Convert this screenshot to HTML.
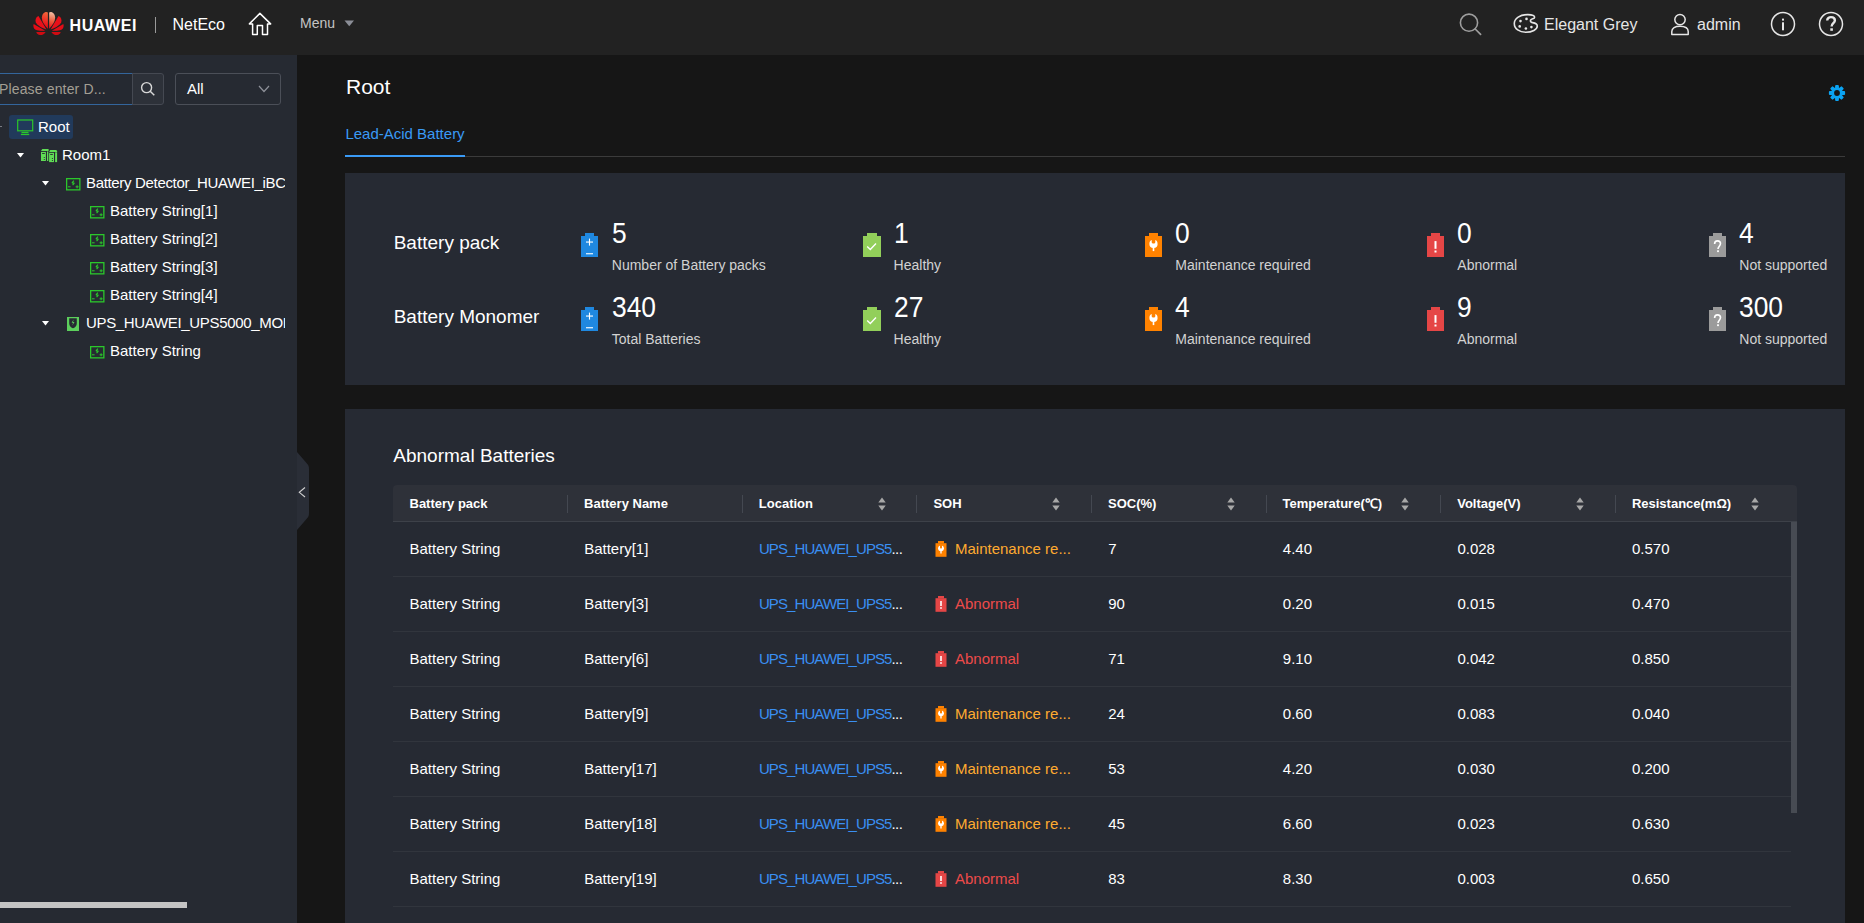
<!DOCTYPE html>
<html><head><meta charset="utf-8">
<style>
*{margin:0;padding:0;box-sizing:border-box}
html,body{width:1864px;height:923px;overflow:hidden;background:#161616;font-family:"Liberation Sans",sans-serif;color:#fff}
.a{position:absolute}
.t{position:absolute;white-space:nowrap;line-height:1}
svg{position:absolute;overflow:visible}
</style></head><body>

<div class="a" style="left:0;top:55px;width:297px;height:868px;background:#262a32"></div>
<div class="a" style="left:-20px;top:73px;width:153px;height:32px;border:1px solid #33659c;border-right:none;border-radius:2px 0 0 2px;background:#252931"></div>
<div class="a" style="left:132px;top:73px;width:32px;height:32px;border:1px solid #454952;border-radius:0 3px 3px 0;background:#2d3139"></div>
<svg style="left:140px;top:81px" width="16" height="16" viewBox="0 0 16 16"><circle cx="6.6" cy="6.6" r="5" fill="none" stroke="#d8d8d8" stroke-width="1.4"/><line x1="10.2" y1="10.2" x2="14.3" y2="14.3" stroke="#d8d8d8" stroke-width="1.5"/></svg>
<div class="t" style="left:-1.0px;top:82.1px;font-size:14px;color:#a39f94;font-weight:400;letter-spacing:0.15px">Please enter D...</div>
<div class="a" style="left:175px;top:73px;width:106px;height:32px;border:1px solid #4b4f58;border-radius:3px;background:#262a32"></div>
<div class="t" style="left:187.0px;top:81.3px;font-size:15px;color:#fff;font-weight:400;">All</div>
<svg style="left:258px;top:85px" width="12" height="8" viewBox="0 0 12 8"><polyline points="1,1 6,6.5 11,1" fill="none" stroke="#8e9199" stroke-width="1.2"/></svg>
<div class="a" style="left:0;top:126px;width:2px;height:1px;background:#7a7d84"></div>
<div class="a" style="left:9px;top:115px;width:64px;height:24px;background:#213a5b;border-radius:3px"></div>
<svg style="left:17px;top:119px" width="17" height="17" viewBox="0 0 17 17"><rect x="0.7" y="1.0" width="15" height="10.8" fill="none" stroke="#2bc72b" stroke-width="1.2"/><rect x="4.5" y="12.8" width="7" height="1.3" fill="#2bc72b"/><rect x="3.9" y="14.8" width="8.3" height="1.3" fill="#2bc72b"/></svg>
<div class="t" style="left:38.0px;top:119.3px;font-size:15px;color:#fff;font-weight:400;">Root</div>
<svg style="left:17.3px;top:152.6px" width="8" height="5" viewBox="0 0 8 5"><polygon points="0,0 7,0 3.5,4.5" fill="#fff"/></svg>
<svg style="left:38px;top:145px" width="22" height="20" viewBox="0 0 22 20">
<path d="M4.3 3.9 L10.2 3.9 L10.6 4.6 L10.6 5.9 L3 5.9 Z" fill="#5fdc55"/>
<rect x="3" y="6.9" width="4.9" height="9.1" fill="#5fdc55"/><rect x="9" y="6.4" width="1.3" height="9.6" fill="#5fdc55"/>
<rect x="4.1" y="8.1" width="2.7" height="0.9" fill="#262a32"/><circle cx="6.3" cy="12.5" r="0.6" fill="#262a32"/><circle cx="6.3" cy="14.5" r="0.6" fill="#262a32"/>
<path d="M12.2 5 L18.2 5 L19.1 5.9 L19.1 6.9 L11.1 6.9 Z" fill="#5fdc55"/>
<rect x="11.1" y="7.8" width="4.9" height="9.3" fill="#5fdc55"/><rect x="17.1" y="7.3" width="2" height="9.8" fill="#5fdc55"/>
<rect x="12.2" y="9.0" width="2.6" height="0.9" fill="#262a32"/><circle cx="14.4" cy="13.5" r="0.6" fill="#262a32"/><circle cx="14.4" cy="15.5" r="0.6" fill="#262a32"/>
</svg>
<div class="t" style="left:62.0px;top:147.3px;font-size:15px;color:#fff;font-weight:400;">Room1</div>
<svg style="left:41.5px;top:180.6px" width="8" height="5" viewBox="0 0 8 5"><polygon points="0,0 7,0 3.5,4.5" fill="#fff"/></svg>
<svg style="left:65.5px;top:177.5px" width="15" height="13" viewBox="0 0 15 13">
<rect x="0.65" y="0.65" width="13.2" height="11.2" fill="none" stroke="#2bc72b" stroke-width="1.3"/>
<path d="M7.9 2.6 L6.0 4.9 L8.3 5.1 L6.6 7.2" fill="none" stroke="#2bc72b" stroke-width="1.1" stroke-linejoin="bevel"/>
<rect x="2.0" y="8.3" width="2.6" height="1.0" fill="#2bc72b"/>
<rect x="9.6" y="8.3" width="3.0" height="1.0" fill="#2bc72b"/><rect x="10.6" y="7.3" width="1.0" height="3.0" fill="#2bc72b"/>
</svg>
<div class="a" style="left:86px;top:165px;width:199px;height:28px;overflow:hidden">
<div class="t" style="left:0;top:10.3px;font-size:15px;color:#fff;letter-spacing:-0.33px">Battery Detector_HUAWEI_iBC</div>
</div>
<svg style="left:89.5px;top:205.5px" width="15" height="13" viewBox="0 0 15 13">
<rect x="0.65" y="0.65" width="13.2" height="11.2" fill="none" stroke="#2bc72b" stroke-width="1.3"/>
<path d="M7.9 2.6 L6.0 4.9 L8.3 5.1 L6.6 7.2" fill="none" stroke="#2bc72b" stroke-width="1.1" stroke-linejoin="bevel"/>
<rect x="2.0" y="8.3" width="2.6" height="1.0" fill="#2bc72b"/>
<rect x="9.6" y="8.3" width="3.0" height="1.0" fill="#2bc72b"/><rect x="10.6" y="7.3" width="1.0" height="3.0" fill="#2bc72b"/>
</svg>
<div class="t" style="left:110.0px;top:203.3px;font-size:15px;color:#fff;font-weight:400;">Battery String[1]</div>
<svg style="left:89.5px;top:233.5px" width="15" height="13" viewBox="0 0 15 13">
<rect x="0.65" y="0.65" width="13.2" height="11.2" fill="none" stroke="#2bc72b" stroke-width="1.3"/>
<path d="M7.9 2.6 L6.0 4.9 L8.3 5.1 L6.6 7.2" fill="none" stroke="#2bc72b" stroke-width="1.1" stroke-linejoin="bevel"/>
<rect x="2.0" y="8.3" width="2.6" height="1.0" fill="#2bc72b"/>
<rect x="9.6" y="8.3" width="3.0" height="1.0" fill="#2bc72b"/><rect x="10.6" y="7.3" width="1.0" height="3.0" fill="#2bc72b"/>
</svg>
<div class="t" style="left:110.0px;top:231.3px;font-size:15px;color:#fff;font-weight:400;">Battery String[2]</div>
<svg style="left:89.5px;top:261.5px" width="15" height="13" viewBox="0 0 15 13">
<rect x="0.65" y="0.65" width="13.2" height="11.2" fill="none" stroke="#2bc72b" stroke-width="1.3"/>
<path d="M7.9 2.6 L6.0 4.9 L8.3 5.1 L6.6 7.2" fill="none" stroke="#2bc72b" stroke-width="1.1" stroke-linejoin="bevel"/>
<rect x="2.0" y="8.3" width="2.6" height="1.0" fill="#2bc72b"/>
<rect x="9.6" y="8.3" width="3.0" height="1.0" fill="#2bc72b"/><rect x="10.6" y="7.3" width="1.0" height="3.0" fill="#2bc72b"/>
</svg>
<div class="t" style="left:110.0px;top:259.3px;font-size:15px;color:#fff;font-weight:400;">Battery String[3]</div>
<svg style="left:89.5px;top:289.5px" width="15" height="13" viewBox="0 0 15 13">
<rect x="0.65" y="0.65" width="13.2" height="11.2" fill="none" stroke="#2bc72b" stroke-width="1.3"/>
<path d="M7.9 2.6 L6.0 4.9 L8.3 5.1 L6.6 7.2" fill="none" stroke="#2bc72b" stroke-width="1.1" stroke-linejoin="bevel"/>
<rect x="2.0" y="8.3" width="2.6" height="1.0" fill="#2bc72b"/>
<rect x="9.6" y="8.3" width="3.0" height="1.0" fill="#2bc72b"/><rect x="10.6" y="7.3" width="1.0" height="3.0" fill="#2bc72b"/>
</svg>
<div class="t" style="left:110.0px;top:287.3px;font-size:15px;color:#fff;font-weight:400;">Battery String[4]</div>
<svg style="left:41.5px;top:320.6px" width="8" height="5" viewBox="0 0 8 5"><polygon points="0,0 7,0 3.5,4.5" fill="#fff"/></svg>
<svg style="left:67px;top:317px" width="12" height="14" viewBox="0 0 12 14">
<rect x="0" y="0" width="12" height="14" fill="#5ccf5c"/>
<path d="M2.2 1.2 L9.8 1.2 L9.8 6 C9.8 9.5 7.5 10.8 6 11.2 C4.5 10.8 2.2 9.5 2.2 6 Z" fill="#262a32"/>
<path d="M6.6 2.5 L4.6 5.8 L6.1 5.8 L5.3 8.6 L7.5 5.0 L6.0 5.0 Z" fill="#5ccf5c"/>
</svg>
<div class="a" style="left:86px;top:305px;width:199px;height:28px;overflow:hidden">
<div class="t" style="left:0;top:10.3px;font-size:15px;color:#fff;letter-spacing:-0.33px">UPS_HUAWEI_UPS5000_MODULE</div>
</div>
<svg style="left:89.5px;top:345.5px" width="15" height="13" viewBox="0 0 15 13">
<rect x="0.65" y="0.65" width="13.2" height="11.2" fill="none" stroke="#2bc72b" stroke-width="1.3"/>
<path d="M7.9 2.6 L6.0 4.9 L8.3 5.1 L6.6 7.2" fill="none" stroke="#2bc72b" stroke-width="1.1" stroke-linejoin="bevel"/>
<rect x="2.0" y="8.3" width="2.6" height="1.0" fill="#2bc72b"/>
<rect x="9.6" y="8.3" width="3.0" height="1.0" fill="#2bc72b"/><rect x="10.6" y="7.3" width="1.0" height="3.0" fill="#2bc72b"/>
</svg>
<div class="t" style="left:110.0px;top:343.3px;font-size:15px;color:#fff;font-weight:400;">Battery String</div>
<div class="a" style="left:0;top:902px;width:187px;height:6px;background:#c4c4c4"></div>
<svg style="left:297px;top:450px" width="13" height="82" viewBox="0 0 13 82"><path d="M0 2 L9.5 13 C11.5 15.5 12 16 12 19 L12 63 C12 66 11.5 66.5 9.5 69 L0 80 Z" fill="#2a2e37"/><polyline points="8,37.5 2.3,42.3 8,47" fill="none" stroke="#d0d0d0" stroke-width="1.1"/></svg>
<div class="a" style="left:0;top:0;width:1864px;height:55px;background:#222222"></div>
<svg style="left:30px;top:8px" width="38" height="30" viewBox="0 0 38 30"><defs><linearGradient id="hgL1" x1="17" y1="4" x2="12" y2="16" gradientUnits="userSpaceOnUse"><stop offset="0" stop-color="#f36a3c"/><stop offset="1" stop-color="#ea1019"/></linearGradient><linearGradient id="hgR1" x1="15" y1="5" x2="17" y2="20" gradientUnits="userSpaceOnUse"><stop offset="0" stop-color="#f2b79c"/><stop offset="0.55" stop-color="#ec5a3a"/><stop offset="1" stop-color="#e8101a"/></linearGradient></defs><g><path d="M17.9 20.8 L17.9 4.6 C16.5 3.3 12.3 4.3 11.9 9.3 C11.7 13.6 14.8 17.6 17.9 20.8 Z" fill="url(#hgL1)"/><path d="M16.4 21.4 L8.5 8.1 C5.8 9.2 5.0 12 5.8 14.2 C7.0 17.2 11.2 19.6 16.4 21.4 Z" fill="#e9101a"/><path d="M15.2 22.7 L3.6 16.0 C2.9 18.2 3.6 20.6 5.6 21.7 C8.2 22.9 11.4 22.9 15.2 22.7 Z" fill="#e30d17"/><path d="M6.3 23.9 L15.6 23.9 C14.6 25.9 12.2 27.2 9.9 27.0 C8.0 26.8 6.8 25.5 6.3 23.9 Z" fill="#d00b12"/></g><g transform="translate(37 0) scale(-1 1)"><path d="M17.9 20.8 L17.9 4.6 C16.5 3.3 12.3 4.3 11.9 9.3 C11.7 13.6 14.8 17.6 17.9 20.8 Z" fill="url(#hgR1)"/><path d="M16.4 21.4 L8.5 8.1 C5.8 9.2 5.0 12 5.8 14.2 C7.0 17.2 11.2 19.6 16.4 21.4 Z" fill="#e9101a"/><path d="M15.2 22.7 L3.6 16.0 C2.9 18.2 3.6 20.6 5.6 21.7 C8.2 22.9 11.4 22.9 15.2 22.7 Z" fill="#e30d17"/><path d="M6.3 23.9 L15.6 23.9 C14.6 25.9 12.2 27.2 9.9 27.0 C8.0 26.8 6.8 25.5 6.3 23.9 Z" fill="#d00b12"/></g></svg>
<div class="t" style="left:69.5px;top:17.8px;font-size:16px;color:#fff;font-weight:700;letter-spacing:0.6px">HUAWEI</div>
<div class="a" style="left:155px;top:17px;width:1px;height:16px;background:#9a9a9a"></div>
<div class="t" style="left:172.5px;top:16.8px;font-size:16px;color:#fff;font-weight:400;">NetEco</div>
<svg style="left:248px;top:12px" width="24" height="24" viewBox="0 0 24 24"><path d="M1.4 11.9 L11.9 1.4 L22.6 11.9 L19.5 11.9 L19.5 22.5 L14.5 22.5 L14.5 13.6 L9.3 13.6 L9.3 22.5 L4.6 22.5 L4.6 11.9 Z" fill="none" stroke="#fff" stroke-width="1.5" stroke-linejoin="round"/></svg>
<div class="t" style="left:300.0px;top:15.9px;font-size:14px;color:#c4c4c4;font-weight:400;">Menu</div>
<svg style="left:344px;top:20px" width="11" height="7" viewBox="0 0 11 7"><polygon points="0.5,0.5 10,0.5 5.25,6.2" fill="#8b8e97"/></svg>
<svg style="left:1458px;top:12px" width="26" height="26" viewBox="0 0 26 26"><circle cx="11" cy="10.7" r="8.6" fill="none" stroke="#9e9e9e" stroke-width="1.6"/><line x1="17.2" y1="17" x2="22.6" y2="22.4" stroke="#9e9e9e" stroke-width="1.7" stroke-linecap="round"/></svg>
<svg style="left:1510px;top:10px" width="32" height="28" viewBox="0 0 32 28">
<path d="M17.9 4.6 C10 4.6 4.3 8.5 4.3 13.5 C4.3 19 9.5 22.3 15.8 22.3 C22 22.3 27.3 19.5 27.3 16 C27.3 13.6 25 13 22.6 12.6 C20.4 12.2 19.9 10.6 21.1 9.6 C22.5 8.6 24.6 8.9 24.6 7.3 C24.6 5.5 21.5 4.6 17.9 4.6 Z" fill="none" stroke="#e6e6e6" stroke-width="1.6"/>
<circle cx="16.5" cy="8.9" r="1.3" fill="#e6e6e6"/><circle cx="10.5" cy="11.1" r="1.3" fill="#e6e6e6"/><circle cx="9.7" cy="16.4" r="1.3" fill="#e6e6e6"/><circle cx="15.9" cy="18.5" r="1.3" fill="#e6e6e6"/><circle cx="21.4" cy="17.1" r="1.3" fill="#e6e6e6"/>
</svg>
<div class="t" style="left:1544.0px;top:16.7px;font-size:16px;color:#e6e6e6;font-weight:400;">Elegant Grey</div>
<svg style="left:1670px;top:12px" width="20" height="24" viewBox="0 0 20 24"><circle cx="10" cy="7.6" r="5.2" fill="none" stroke="#e6e6e6" stroke-width="1.5"/><path d="M1.8 22.5 L1.8 19.5 C1.8 16 5 14.2 10 14.2 C15 14.2 18.2 16 18.2 19.5 L18.2 22.5 Z" fill="none" stroke="#e6e6e6" stroke-width="1.5" stroke-linejoin="round"/></svg>
<div class="t" style="left:1697.0px;top:16.7px;font-size:16px;color:#e6e6e6;font-weight:400;">admin</div>
<svg style="left:1770px;top:11px" width="26" height="26" viewBox="0 0 26 26"><circle cx="13" cy="13" r="11.5" fill="none" stroke="#e6e6e6" stroke-width="1.5"/><rect x="12" y="11.3" width="2" height="8" fill="#e6e6e6"/><rect x="12" y="7.6" width="2" height="2" fill="#e6e6e6"/></svg>
<svg style="left:1818px;top:11px" width="26" height="26" viewBox="0 0 26 26"><circle cx="13" cy="13" r="11.5" fill="none" stroke="#e6e6e6" stroke-width="1.5"/><path d="M9.2 9.6 C9.2 7.2 11 6.1 13 6.1 C15.2 6.1 16.9 7.4 16.9 9.4 C16.9 12.1 13.6 12.3 13.6 15.4" fill="none" stroke="#e6e6e6" stroke-width="2.4"/><rect x="12.3" y="17.3" width="2.6" height="2.5" fill="#e6e6e6"/></svg>
<div class="t" style="left:346.0px;top:76.1px;font-size:21px;color:#fff;font-weight:400;">Root</div>
<svg style="left:1828px;top:84px" width="18" height="18" viewBox="-9 -9 18 18"><rect x="-1.9" y="-8.1" width="3.8" height="4" rx="1" transform="rotate(0)" fill="#0ba3f2"/><rect x="-1.9" y="-8.1" width="3.8" height="4" rx="1" transform="rotate(45)" fill="#0ba3f2"/><rect x="-1.9" y="-8.1" width="3.8" height="4" rx="1" transform="rotate(90)" fill="#0ba3f2"/><rect x="-1.9" y="-8.1" width="3.8" height="4" rx="1" transform="rotate(135)" fill="#0ba3f2"/><rect x="-1.9" y="-8.1" width="3.8" height="4" rx="1" transform="rotate(180)" fill="#0ba3f2"/><rect x="-1.9" y="-8.1" width="3.8" height="4" rx="1" transform="rotate(225)" fill="#0ba3f2"/><rect x="-1.9" y="-8.1" width="3.8" height="4" rx="1" transform="rotate(270)" fill="#0ba3f2"/><rect x="-1.9" y="-8.1" width="3.8" height="4" rx="1" transform="rotate(315)" fill="#0ba3f2"/><circle r="5.8" fill="#0ba3f2"/><circle r="2.9" fill="#161616"/></svg>
<div class="t" style="left:345.4px;top:126.3px;font-size:15px;color:#3a9af5;font-weight:400;">Lead-Acid Battery</div>
<div class="a" style="left:345px;top:156px;width:1500px;height:1px;background:#3b3b3b"></div>
<div class="a" style="left:345px;top:155px;width:120px;height:2px;background:#3a9af5"></div>
<div class="a" style="left:345px;top:173px;width:1500px;height:212px;background:#262a33"></div>
<div class="t" style="left:393.7px;top:232.8px;font-size:19px;color:#fff;font-weight:400;">Battery pack</div>
<div class="t" style="left:393.7px;top:306.7px;font-size:19px;color:#fff;font-weight:400;">Battery Monomer</div>
<div class="a" style="left:585.0px;top:233px;width:9px;height:3px;background:#1f88e0"></div>
<div class="a" style="left:581px;top:236px;width:17px;height:21px;background:#1f88e0"></div>
<svg style="left:585.0px;top:238px" width="9" height="18" viewBox="0 0 9 18"><rect x="1" y="3.5" width="7" height="1.1" fill="#fff"/><rect x="3.95" y="0.6" width="1.1" height="7" fill="#fff"/><rect x="1" y="15.2" width="7" height="1.1" fill="#fff"/></svg>
<div class="t" style="left:611.8px;top:218.9px;font-size:29px;color:#fff;font-weight:400;transform:scaleX(0.91);transform-origin:0 0">5</div>
<div class="t" style="left:611.8px;top:257.7px;font-size:14px;color:#d2d2d2;font-weight:400;">Number of Battery packs</div>
<div class="a" style="left:585.0px;top:307px;width:9px;height:3px;background:#1f88e0"></div>
<div class="a" style="left:581px;top:310px;width:17px;height:21px;background:#1f88e0"></div>
<svg style="left:585.0px;top:312px" width="9" height="18" viewBox="0 0 9 18"><rect x="1" y="3.5" width="7" height="1.1" fill="#fff"/><rect x="3.95" y="0.6" width="1.1" height="7" fill="#fff"/><rect x="1" y="15.2" width="7" height="1.1" fill="#fff"/></svg>
<div class="t" style="left:611.8px;top:292.9px;font-size:29px;color:#fff;font-weight:400;transform:scaleX(0.91);transform-origin:0 0">340</div>
<div class="t" style="left:611.8px;top:331.7px;font-size:14px;color:#d2d2d2;font-weight:400;">Total Batteries</div>
<div class="a" style="left:867.0px;top:233px;width:10px;height:3px;background:#92cf5a"></div>
<div class="a" style="left:863px;top:236px;width:18px;height:21px;background:#92cf5a"></div>
<svg style="left:863px;top:236px" width="18" height="21" viewBox="0 0 18 21"><polyline points="4.2,10.4 7.3,13.4 13,7.6" fill="none" stroke="#fff" stroke-width="1.4"/></svg>
<div class="t" style="left:893.6px;top:218.9px;font-size:29px;color:#fff;font-weight:400;transform:scaleX(0.91);transform-origin:0 0">1</div>
<div class="t" style="left:893.6px;top:257.7px;font-size:14px;color:#d2d2d2;font-weight:400;">Healthy</div>
<div class="a" style="left:867.0px;top:307px;width:10px;height:3px;background:#92cf5a"></div>
<div class="a" style="left:863px;top:310px;width:18px;height:21px;background:#92cf5a"></div>
<svg style="left:863px;top:310px" width="18" height="21" viewBox="0 0 18 21"><polyline points="4.2,10.4 7.3,13.4 13,7.6" fill="none" stroke="#fff" stroke-width="1.4"/></svg>
<div class="t" style="left:893.6px;top:292.9px;font-size:29px;color:#fff;font-weight:400;transform:scaleX(0.91);transform-origin:0 0">27</div>
<div class="t" style="left:893.6px;top:331.7px;font-size:14px;color:#d2d2d2;font-weight:400;">Healthy</div>
<div class="a" style="left:1149.0px;top:233px;width:9px;height:3px;background:#ff8200"></div>
<div class="a" style="left:1145px;top:236px;width:17px;height:21px;background:#ff8200"></div>
<svg style="left:1145px;top:236px" width="17" height="21" viewBox="0 0 17 21"><circle cx="8.5" cy="7.9" r="4.1" fill="#fff"/><path d="M6.7 2.5 L6.7 6.2 C6.7 7.9 10.3 7.9 10.3 6.2 L10.3 2.5 Z" fill="#ff8200"/><rect x="7.7" y="10.5" width="1.6" height="4.6" fill="#fff"/></svg>
<div class="t" style="left:1175.3px;top:218.9px;font-size:29px;color:#fff;font-weight:400;transform:scaleX(0.91);transform-origin:0 0">0</div>
<div class="t" style="left:1175.3px;top:257.7px;font-size:14px;color:#d2d2d2;font-weight:400;">Maintenance required</div>
<div class="a" style="left:1149.0px;top:307px;width:9px;height:3px;background:#ff8200"></div>
<div class="a" style="left:1145px;top:310px;width:17px;height:21px;background:#ff8200"></div>
<svg style="left:1145px;top:310px" width="17" height="21" viewBox="0 0 17 21"><circle cx="8.5" cy="7.9" r="4.1" fill="#fff"/><path d="M6.7 2.5 L6.7 6.2 C6.7 7.9 10.3 7.9 10.3 6.2 L10.3 2.5 Z" fill="#ff8200"/><rect x="7.7" y="10.5" width="1.6" height="4.6" fill="#fff"/></svg>
<div class="t" style="left:1175.3px;top:292.9px;font-size:29px;color:#fff;font-weight:400;transform:scaleX(0.91);transform-origin:0 0">4</div>
<div class="t" style="left:1175.3px;top:331.7px;font-size:14px;color:#d2d2d2;font-weight:400;">Maintenance required</div>
<div class="a" style="left:1431.0px;top:233px;width:9px;height:3px;background:#e54646"></div>
<div class="a" style="left:1427px;top:236px;width:17px;height:21px;background:#e54646"></div>
<svg style="left:1427px;top:236px" width="17" height="21" viewBox="0 0 17 21"><rect x="7.5" y="5.1" width="2" height="7.7" fill="#fff"/><rect x="7.5" y="14.5" width="2" height="2" fill="#fff"/></svg>
<div class="t" style="left:1457.3px;top:218.9px;font-size:29px;color:#fff;font-weight:400;transform:scaleX(0.91);transform-origin:0 0">0</div>
<div class="t" style="left:1457.3px;top:257.7px;font-size:14px;color:#d2d2d2;font-weight:400;">Abnormal</div>
<div class="a" style="left:1431.0px;top:307px;width:9px;height:3px;background:#e54646"></div>
<div class="a" style="left:1427px;top:310px;width:17px;height:21px;background:#e54646"></div>
<svg style="left:1427px;top:310px" width="17" height="21" viewBox="0 0 17 21"><rect x="7.5" y="5.1" width="2" height="7.7" fill="#fff"/><rect x="7.5" y="14.5" width="2" height="2" fill="#fff"/></svg>
<div class="t" style="left:1457.3px;top:292.9px;font-size:29px;color:#fff;font-weight:400;transform:scaleX(0.91);transform-origin:0 0">9</div>
<div class="t" style="left:1457.3px;top:331.7px;font-size:14px;color:#d2d2d2;font-weight:400;">Abnormal</div>
<div class="a" style="left:1713.0px;top:233px;width:9px;height:3px;background:#9b9b9b"></div>
<div class="a" style="left:1709px;top:236px;width:17px;height:21px;background:#9b9b9b"></div>
<svg style="left:1709px;top:236px" width="17" height="21" viewBox="0 0 17 21"><path d="M5.6 8.0 C5.6 5.8 6.9 4.9 8.5 4.9 C10.3 4.9 11.5 6.1 11.5 7.6 C11.5 10.0 9.0 10.4 9.0 13.0" fill="none" stroke="#fff" stroke-width="1.6"/><rect x="8.1" y="14.3" width="1.8" height="1.8" fill="#fff"/></svg>
<div class="t" style="left:1739.3px;top:218.9px;font-size:29px;color:#fff;font-weight:400;transform:scaleX(0.91);transform-origin:0 0">4</div>
<div class="t" style="left:1739.3px;top:257.7px;font-size:14px;color:#d2d2d2;font-weight:400;">Not supported</div>
<div class="a" style="left:1713.0px;top:307px;width:9px;height:3px;background:#9b9b9b"></div>
<div class="a" style="left:1709px;top:310px;width:17px;height:21px;background:#9b9b9b"></div>
<svg style="left:1709px;top:310px" width="17" height="21" viewBox="0 0 17 21"><path d="M5.6 8.0 C5.6 5.8 6.9 4.9 8.5 4.9 C10.3 4.9 11.5 6.1 11.5 7.6 C11.5 10.0 9.0 10.4 9.0 13.0" fill="none" stroke="#fff" stroke-width="1.6"/><rect x="8.1" y="14.3" width="1.8" height="1.8" fill="#fff"/></svg>
<div class="t" style="left:1739.3px;top:292.9px;font-size:29px;color:#fff;font-weight:400;transform:scaleX(0.91);transform-origin:0 0">300</div>
<div class="t" style="left:1739.3px;top:331.7px;font-size:14px;color:#d2d2d2;font-weight:400;">Not supported</div>
<div class="a" style="left:345px;top:409px;width:1500px;height:514px;background:#262a33"></div>
<div class="t" style="left:393.3px;top:445.9px;font-size:19px;color:#fff;font-weight:400;">Abnormal Batteries</div>
<div class="a" style="left:393px;top:485px;width:1404px;height:36px;background:#2e3139;border-radius:4px 4px 0 0"></div>
<div class="a" style="left:393px;top:521px;width:1404px;height:1px;background:#3d4149"></div>
<div class="t" style="left:409.5px;top:496.8px;font-size:13px;color:#fff;font-weight:700;">Battery pack</div>
<div class="t" style="left:584.1px;top:496.8px;font-size:13px;color:#fff;font-weight:700;">Battery Name</div>
<div class="a" style="left:567.1px;top:494.5px;width:1px;height:18.5px;background:#444851"></div>
<div class="t" style="left:758.8px;top:496.8px;font-size:13px;color:#fff;font-weight:700;">Location</div>
<div class="a" style="left:741.8px;top:494.5px;width:1px;height:18.5px;background:#444851"></div>
<svg style="left:877.5px;top:496.5px" width="8" height="14" viewBox="0 0 8 14"><polygon points="0.3,5.6 4,0.6 7.7,5.6" fill="#a8a8a8"/><polygon points="0.3,8.4 4,13.6 7.7,8.4" fill="#a8a8a8"/></svg>
<div class="t" style="left:933.4px;top:496.8px;font-size:13px;color:#fff;font-weight:700;">SOH</div>
<div class="a" style="left:916.4px;top:494.5px;width:1px;height:18.5px;background:#444851"></div>
<svg style="left:1052.1px;top:496.5px" width="8" height="14" viewBox="0 0 8 14"><polygon points="0.3,5.6 4,0.6 7.7,5.6" fill="#a8a8a8"/><polygon points="0.3,8.4 4,13.6 7.7,8.4" fill="#a8a8a8"/></svg>
<div class="t" style="left:1108.0px;top:496.8px;font-size:13px;color:#fff;font-weight:700;">SOC(%)</div>
<div class="a" style="left:1091.0px;top:494.5px;width:1px;height:18.5px;background:#444851"></div>
<svg style="left:1226.7px;top:496.5px" width="8" height="14" viewBox="0 0 8 14"><polygon points="0.3,5.6 4,0.6 7.7,5.6" fill="#a8a8a8"/><polygon points="0.3,8.4 4,13.6 7.7,8.4" fill="#a8a8a8"/></svg>
<div class="t" style="left:1282.6px;top:496.8px;font-size:13px;color:#fff;font-weight:700;">Temperature(&#8451;)</div>
<div class="a" style="left:1265.6px;top:494.5px;width:1px;height:18.5px;background:#444851"></div>
<svg style="left:1401.3px;top:496.5px" width="8" height="14" viewBox="0 0 8 14"><polygon points="0.3,5.6 4,0.6 7.7,5.6" fill="#a8a8a8"/><polygon points="0.3,8.4 4,13.6 7.7,8.4" fill="#a8a8a8"/></svg>
<div class="t" style="left:1457.2px;top:496.8px;font-size:13px;color:#fff;font-weight:700;">Voltage(V)</div>
<div class="a" style="left:1440.2px;top:494.5px;width:1px;height:18.5px;background:#444851"></div>
<svg style="left:1576.0px;top:496.5px" width="8" height="14" viewBox="0 0 8 14"><polygon points="0.3,5.6 4,0.6 7.7,5.6" fill="#a8a8a8"/><polygon points="0.3,8.4 4,13.6 7.7,8.4" fill="#a8a8a8"/></svg>
<div class="t" style="left:1631.9px;top:496.8px;font-size:13px;color:#fff;font-weight:700;">Resistance(m&#937;)</div>
<div class="a" style="left:1614.9px;top:494.5px;width:1px;height:18.5px;background:#444851"></div>
<svg style="left:1750.6px;top:496.5px" width="8" height="14" viewBox="0 0 8 14"><polygon points="0.3,5.6 4,0.6 7.7,5.6" fill="#a8a8a8"/><polygon points="0.3,8.4 4,13.6 7.7,8.4" fill="#a8a8a8"/></svg>
<div class="t" style="left:409.5px;top:541.1px;font-size:15px;color:#fff;font-weight:400;">Battery String</div>
<div class="t" style="left:584.2px;top:541.1px;font-size:15px;color:#fff;font-weight:400;">Battery[1]</div>
<div class="t" style="left:758.9px;top:541.1px;font-size:15px;color:#3a8ff2;font-weight:400;letter-spacing:-0.9px">UPS_HUAWEI_UPS5<span style="color:#fff;letter-spacing:-0.6px">...</span></div>
<svg style="left:935px;top:541px" width="12" height="16" viewBox="0 0 12 16"><rect x="3" y="0" width="6" height="2.5" fill="#ff8200"/><rect x="0.5" y="2.2" width="11" height="13.6" fill="#ff8200"/><circle cx="6" cy="7.3" r="2.9" fill="#fff"/><path d="M5.0 3.9 L5.0 6.7 C5.0 7.7 7.0 7.7 7.0 6.7 L7.0 3.9 Z" fill="#ff8200"/><rect x="5.35" y="9.3" width="1.3" height="3.2" fill="#fff"/></svg>
<div class="t" style="left:955.0px;top:541.1px;font-size:15px;color:#ffaa30;font-weight:400;">Maintenance re...</div>
<div class="t" style="left:1108.2px;top:541.1px;font-size:15px;color:#fff;font-weight:400;">7</div>
<div class="t" style="left:1282.8px;top:541.1px;font-size:15px;color:#fff;font-weight:400;">4.40</div>
<div class="t" style="left:1457.4px;top:541.1px;font-size:15px;color:#fff;font-weight:400;">0.028</div>
<div class="t" style="left:1632.0px;top:541.1px;font-size:15px;color:#fff;font-weight:400;">0.570</div>
<div class="a" style="left:393px;top:576px;width:1398px;height:1px;background:#31353d"></div>
<div class="t" style="left:409.5px;top:596.1px;font-size:15px;color:#fff;font-weight:400;">Battery String</div>
<div class="t" style="left:584.2px;top:596.1px;font-size:15px;color:#fff;font-weight:400;">Battery[3]</div>
<div class="t" style="left:758.9px;top:596.1px;font-size:15px;color:#3a8ff2;font-weight:400;letter-spacing:-0.9px">UPS_HUAWEI_UPS5<span style="color:#fff;letter-spacing:-0.6px">...</span></div>
<svg style="left:935px;top:596px" width="12" height="16" viewBox="0 0 12 16"><rect x="3" y="0" width="6" height="2.5" fill="#e54646"/><rect x="0.5" y="2.2" width="11" height="13.6" fill="#e54646"/><rect x="5.2" y="5" width="1.6" height="5" fill="#fff"/><rect x="5.2" y="11.2" width="1.6" height="1.6" fill="#fff"/></svg>
<div class="t" style="left:955.0px;top:596.1px;font-size:15px;color:#ed4a4a;font-weight:400;">Abnormal</div>
<div class="t" style="left:1108.2px;top:596.1px;font-size:15px;color:#fff;font-weight:400;">90</div>
<div class="t" style="left:1282.8px;top:596.1px;font-size:15px;color:#fff;font-weight:400;">0.20</div>
<div class="t" style="left:1457.4px;top:596.1px;font-size:15px;color:#fff;font-weight:400;">0.015</div>
<div class="t" style="left:1632.0px;top:596.1px;font-size:15px;color:#fff;font-weight:400;">0.470</div>
<div class="a" style="left:393px;top:631px;width:1398px;height:1px;background:#31353d"></div>
<div class="t" style="left:409.5px;top:651.1px;font-size:15px;color:#fff;font-weight:400;">Battery String</div>
<div class="t" style="left:584.2px;top:651.1px;font-size:15px;color:#fff;font-weight:400;">Battery[6]</div>
<div class="t" style="left:758.9px;top:651.1px;font-size:15px;color:#3a8ff2;font-weight:400;letter-spacing:-0.9px">UPS_HUAWEI_UPS5<span style="color:#fff;letter-spacing:-0.6px">...</span></div>
<svg style="left:935px;top:651px" width="12" height="16" viewBox="0 0 12 16"><rect x="3" y="0" width="6" height="2.5" fill="#e54646"/><rect x="0.5" y="2.2" width="11" height="13.6" fill="#e54646"/><rect x="5.2" y="5" width="1.6" height="5" fill="#fff"/><rect x="5.2" y="11.2" width="1.6" height="1.6" fill="#fff"/></svg>
<div class="t" style="left:955.0px;top:651.1px;font-size:15px;color:#ed4a4a;font-weight:400;">Abnormal</div>
<div class="t" style="left:1108.2px;top:651.1px;font-size:15px;color:#fff;font-weight:400;">71</div>
<div class="t" style="left:1282.8px;top:651.1px;font-size:15px;color:#fff;font-weight:400;">9.10</div>
<div class="t" style="left:1457.4px;top:651.1px;font-size:15px;color:#fff;font-weight:400;">0.042</div>
<div class="t" style="left:1632.0px;top:651.1px;font-size:15px;color:#fff;font-weight:400;">0.850</div>
<div class="a" style="left:393px;top:686px;width:1398px;height:1px;background:#31353d"></div>
<div class="t" style="left:409.5px;top:706.1px;font-size:15px;color:#fff;font-weight:400;">Battery String</div>
<div class="t" style="left:584.2px;top:706.1px;font-size:15px;color:#fff;font-weight:400;">Battery[9]</div>
<div class="t" style="left:758.9px;top:706.1px;font-size:15px;color:#3a8ff2;font-weight:400;letter-spacing:-0.9px">UPS_HUAWEI_UPS5<span style="color:#fff;letter-spacing:-0.6px">...</span></div>
<svg style="left:935px;top:706px" width="12" height="16" viewBox="0 0 12 16"><rect x="3" y="0" width="6" height="2.5" fill="#ff8200"/><rect x="0.5" y="2.2" width="11" height="13.6" fill="#ff8200"/><circle cx="6" cy="7.3" r="2.9" fill="#fff"/><path d="M5.0 3.9 L5.0 6.7 C5.0 7.7 7.0 7.7 7.0 6.7 L7.0 3.9 Z" fill="#ff8200"/><rect x="5.35" y="9.3" width="1.3" height="3.2" fill="#fff"/></svg>
<div class="t" style="left:955.0px;top:706.1px;font-size:15px;color:#ffaa30;font-weight:400;">Maintenance re...</div>
<div class="t" style="left:1108.2px;top:706.1px;font-size:15px;color:#fff;font-weight:400;">24</div>
<div class="t" style="left:1282.8px;top:706.1px;font-size:15px;color:#fff;font-weight:400;">0.60</div>
<div class="t" style="left:1457.4px;top:706.1px;font-size:15px;color:#fff;font-weight:400;">0.083</div>
<div class="t" style="left:1632.0px;top:706.1px;font-size:15px;color:#fff;font-weight:400;">0.040</div>
<div class="a" style="left:393px;top:741px;width:1398px;height:1px;background:#31353d"></div>
<div class="t" style="left:409.5px;top:761.1px;font-size:15px;color:#fff;font-weight:400;">Battery String</div>
<div class="t" style="left:584.2px;top:761.1px;font-size:15px;color:#fff;font-weight:400;">Battery[17]</div>
<div class="t" style="left:758.9px;top:761.1px;font-size:15px;color:#3a8ff2;font-weight:400;letter-spacing:-0.9px">UPS_HUAWEI_UPS5<span style="color:#fff;letter-spacing:-0.6px">...</span></div>
<svg style="left:935px;top:761px" width="12" height="16" viewBox="0 0 12 16"><rect x="3" y="0" width="6" height="2.5" fill="#ff8200"/><rect x="0.5" y="2.2" width="11" height="13.6" fill="#ff8200"/><circle cx="6" cy="7.3" r="2.9" fill="#fff"/><path d="M5.0 3.9 L5.0 6.7 C5.0 7.7 7.0 7.7 7.0 6.7 L7.0 3.9 Z" fill="#ff8200"/><rect x="5.35" y="9.3" width="1.3" height="3.2" fill="#fff"/></svg>
<div class="t" style="left:955.0px;top:761.1px;font-size:15px;color:#ffaa30;font-weight:400;">Maintenance re...</div>
<div class="t" style="left:1108.2px;top:761.1px;font-size:15px;color:#fff;font-weight:400;">53</div>
<div class="t" style="left:1282.8px;top:761.1px;font-size:15px;color:#fff;font-weight:400;">4.20</div>
<div class="t" style="left:1457.4px;top:761.1px;font-size:15px;color:#fff;font-weight:400;">0.030</div>
<div class="t" style="left:1632.0px;top:761.1px;font-size:15px;color:#fff;font-weight:400;">0.200</div>
<div class="a" style="left:393px;top:796px;width:1398px;height:1px;background:#31353d"></div>
<div class="t" style="left:409.5px;top:816.1px;font-size:15px;color:#fff;font-weight:400;">Battery String</div>
<div class="t" style="left:584.2px;top:816.1px;font-size:15px;color:#fff;font-weight:400;">Battery[18]</div>
<div class="t" style="left:758.9px;top:816.1px;font-size:15px;color:#3a8ff2;font-weight:400;letter-spacing:-0.9px">UPS_HUAWEI_UPS5<span style="color:#fff;letter-spacing:-0.6px">...</span></div>
<svg style="left:935px;top:816px" width="12" height="16" viewBox="0 0 12 16"><rect x="3" y="0" width="6" height="2.5" fill="#ff8200"/><rect x="0.5" y="2.2" width="11" height="13.6" fill="#ff8200"/><circle cx="6" cy="7.3" r="2.9" fill="#fff"/><path d="M5.0 3.9 L5.0 6.7 C5.0 7.7 7.0 7.7 7.0 6.7 L7.0 3.9 Z" fill="#ff8200"/><rect x="5.35" y="9.3" width="1.3" height="3.2" fill="#fff"/></svg>
<div class="t" style="left:955.0px;top:816.1px;font-size:15px;color:#ffaa30;font-weight:400;">Maintenance re...</div>
<div class="t" style="left:1108.2px;top:816.1px;font-size:15px;color:#fff;font-weight:400;">45</div>
<div class="t" style="left:1282.8px;top:816.1px;font-size:15px;color:#fff;font-weight:400;">6.60</div>
<div class="t" style="left:1457.4px;top:816.1px;font-size:15px;color:#fff;font-weight:400;">0.023</div>
<div class="t" style="left:1632.0px;top:816.1px;font-size:15px;color:#fff;font-weight:400;">0.630</div>
<div class="a" style="left:393px;top:851px;width:1398px;height:1px;background:#31353d"></div>
<div class="t" style="left:409.5px;top:871.1px;font-size:15px;color:#fff;font-weight:400;">Battery String</div>
<div class="t" style="left:584.2px;top:871.1px;font-size:15px;color:#fff;font-weight:400;">Battery[19]</div>
<div class="t" style="left:758.9px;top:871.1px;font-size:15px;color:#3a8ff2;font-weight:400;letter-spacing:-0.9px">UPS_HUAWEI_UPS5<span style="color:#fff;letter-spacing:-0.6px">...</span></div>
<svg style="left:935px;top:871px" width="12" height="16" viewBox="0 0 12 16"><rect x="3" y="0" width="6" height="2.5" fill="#e54646"/><rect x="0.5" y="2.2" width="11" height="13.6" fill="#e54646"/><rect x="5.2" y="5" width="1.6" height="5" fill="#fff"/><rect x="5.2" y="11.2" width="1.6" height="1.6" fill="#fff"/></svg>
<div class="t" style="left:955.0px;top:871.1px;font-size:15px;color:#ed4a4a;font-weight:400;">Abnormal</div>
<div class="t" style="left:1108.2px;top:871.1px;font-size:15px;color:#fff;font-weight:400;">83</div>
<div class="t" style="left:1282.8px;top:871.1px;font-size:15px;color:#fff;font-weight:400;">8.30</div>
<div class="t" style="left:1457.4px;top:871.1px;font-size:15px;color:#fff;font-weight:400;">0.003</div>
<div class="t" style="left:1632.0px;top:871.1px;font-size:15px;color:#fff;font-weight:400;">0.650</div>
<div class="a" style="left:393px;top:906px;width:1398px;height:1px;background:#31353d"></div>
<div class="a" style="left:1791px;top:522px;width:6px;height:291px;background:#474b53"></div>
</body></html>
